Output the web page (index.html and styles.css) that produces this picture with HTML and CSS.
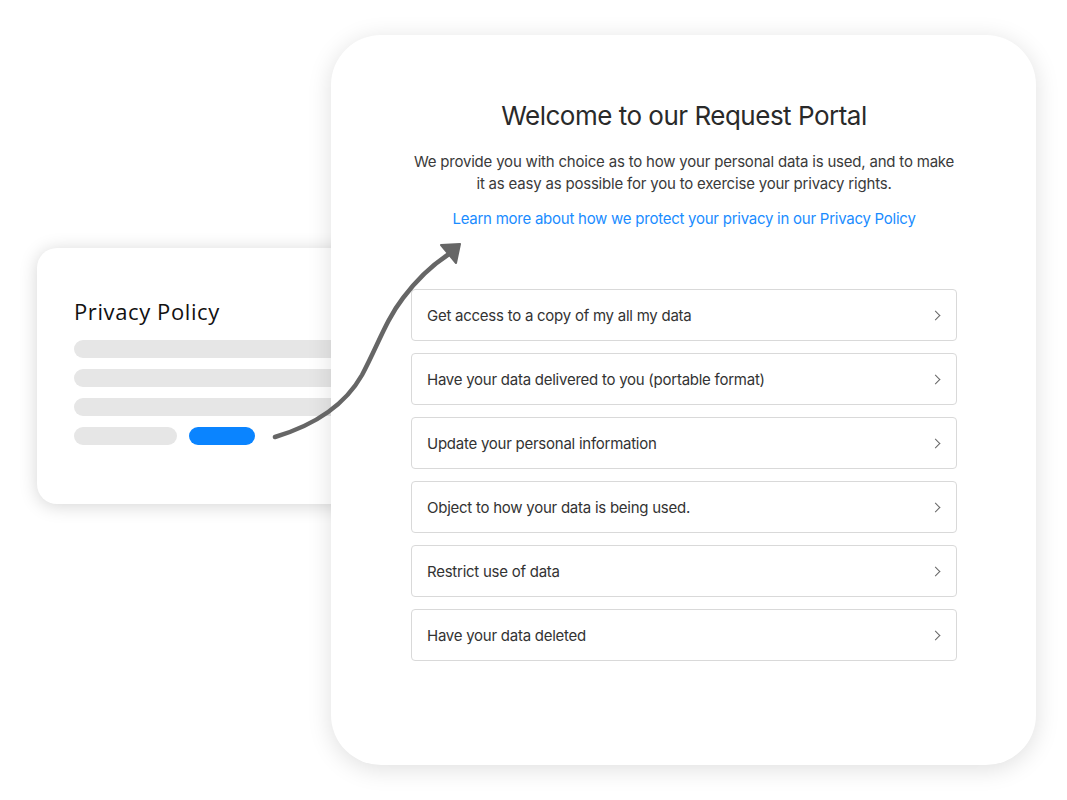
FILE: index.html
```html
<!DOCTYPE html>
<html lang="en">
<head>
  <meta charset="UTF-8" />
  <meta name="viewport" content="width=device-width, initial-scale=1.0" />
  <title>Request Portal</title>
  <link rel="stylesheet" href="styles.css">
</head>
<body>
  <div class="stage">
    <div class="policy-card">
      <h2>Privacy Policy</h2>
      <div class="bar"></div>
      <div class="bar"></div>
      <div class="bar"></div>
      <div class="bar-row">
        <div class="bar short"></div>
        <div class="bar blue"></div>
      </div>
    </div>

    <div class="portal">
      <h1>Welcome to our Request Portal</h1>
      <p class="intro">We provide you with choice as to how your personal data is used, and to make it as easy as possible for you to exercise your privacy rights.</p>
      <a class="policy-link" href="#">Learn more about how we protect your privacy in our Privacy Policy</a>
      <ul class="requests">
        <li>Get access to a copy of my all my data<span class="chev"></span></li>
        <li>Have your data delivered to you (portable format)<span class="chev"></span></li>
        <li>Update your personal information<span class="chev"></span></li>
        <li>Object to how your data is being used.<span class="chev"></span></li>
        <li>Restrict use of data<span class="chev"></span></li>
        <li>Have your data deleted<span class="chev"></span></li>
      </ul>
    </div>

    <svg class="arrow" width="1067" height="800" viewBox="0 0 1067 800">
      <path d="M275 437 C 315 425, 345 405, 362 375 C 378 345, 386 320, 403 298 C 418 278, 432 265, 449 254" fill="none" stroke="#666" stroke-width="4.5" stroke-linecap="round"/>
      <path d="M460 244 L 441 245 L 456 263 Z" fill="#666" stroke="#666" stroke-width="2" stroke-linejoin="round"/>
    </svg>
  </div>
</body>
</html>
```

FILE: styles.css
```css
* {
  margin: 0;
  padding: 0;
  box-sizing: border-box;
}

html, body {
  width: 100%;
  height: 100%;
  background: #ffffff;
  font-family: Inter, "Noto Sans", sans-serif;
}

.stage {
  position: relative;
  display: flex;
  align-items: flex-start;
  padding: 35px 0 0 37px;
  height: 800px;
}

.policy-card {
  flex: none;
  width: 330px;
  height: 256px;
  margin-top: 213px;
  background: #fff;
  border-radius: 20px;
  box-shadow: 0 2px 18px rgba(0, 0, 0, 0.17);
  padding: 50px 0 0 37px;
}

.policy-card h2 {
  font-family: "Open Sans", sans-serif;
  font-weight: 400;
  font-size: 22px;
  line-height: 26px;
  color: #111;
  letter-spacing: 0.6px;
  margin-bottom: 16px;
}

.bar {
  height: 18px;
  border-radius: 9px;
  background: #e6e6e6;
  margin-bottom: 11px;
}

.bar-row {
  display: flex;
  gap: 12px;
}

.bar.short {
  width: 103px;
}

.bar.blue {
  width: 66px;
  background: #0a84ff;
}

.portal {
  position: relative;
  z-index: 1;
  flex: none;
  width: 705px;
  height: 730px;
  margin-left: -36px;
  background: #fff;
  border-radius: 50px;
  box-shadow: 0 4px 24px rgba(0, 0, 0, 0.13);
  padding: 64px 79px 0 80px;
  text-align: center;
}

.portal h1 {
  font-weight: 400;
  font-size: 26px;
  line-height: 34px;
  color: #2a2a2a;
  letter-spacing: -0.5px;
  margin-bottom: 18px;
}

.intro {
  font-size: 15px;
  line-height: 22px;
  color: #3a3a3a;
  letter-spacing: -0.2px;
  margin-bottom: 13px;
}

.policy-link {
  display: block;
  font-size: 15px;
  line-height: 22px;
  color: #1a8cff;
  letter-spacing: -0.25px;
  text-decoration: none;
  margin-bottom: 59px;
}

.requests {
  list-style: none;
  display: flex;
  flex-direction: column;
  gap: 12px;
  text-align: left;
}

.requests li {
  display: flex;
  align-items: center;
  justify-content: space-between;
  height: 52px;
  padding: 0 17px 0 15px;
  border: 1px solid #d9d9d9;
  border-radius: 4px;
  font-size: 15px;
  color: #333;
  letter-spacing: -0.25px;
}

.chev {
  width: 7px;
  height: 7px;
  border-top: 1.8px solid #666;
  border-right: 1.8px solid #666;
  transform: rotate(45deg);
}

.arrow {
  position: absolute;
  top: 0;
  left: 0;
  z-index: 2;
  pointer-events: none;
}
```
